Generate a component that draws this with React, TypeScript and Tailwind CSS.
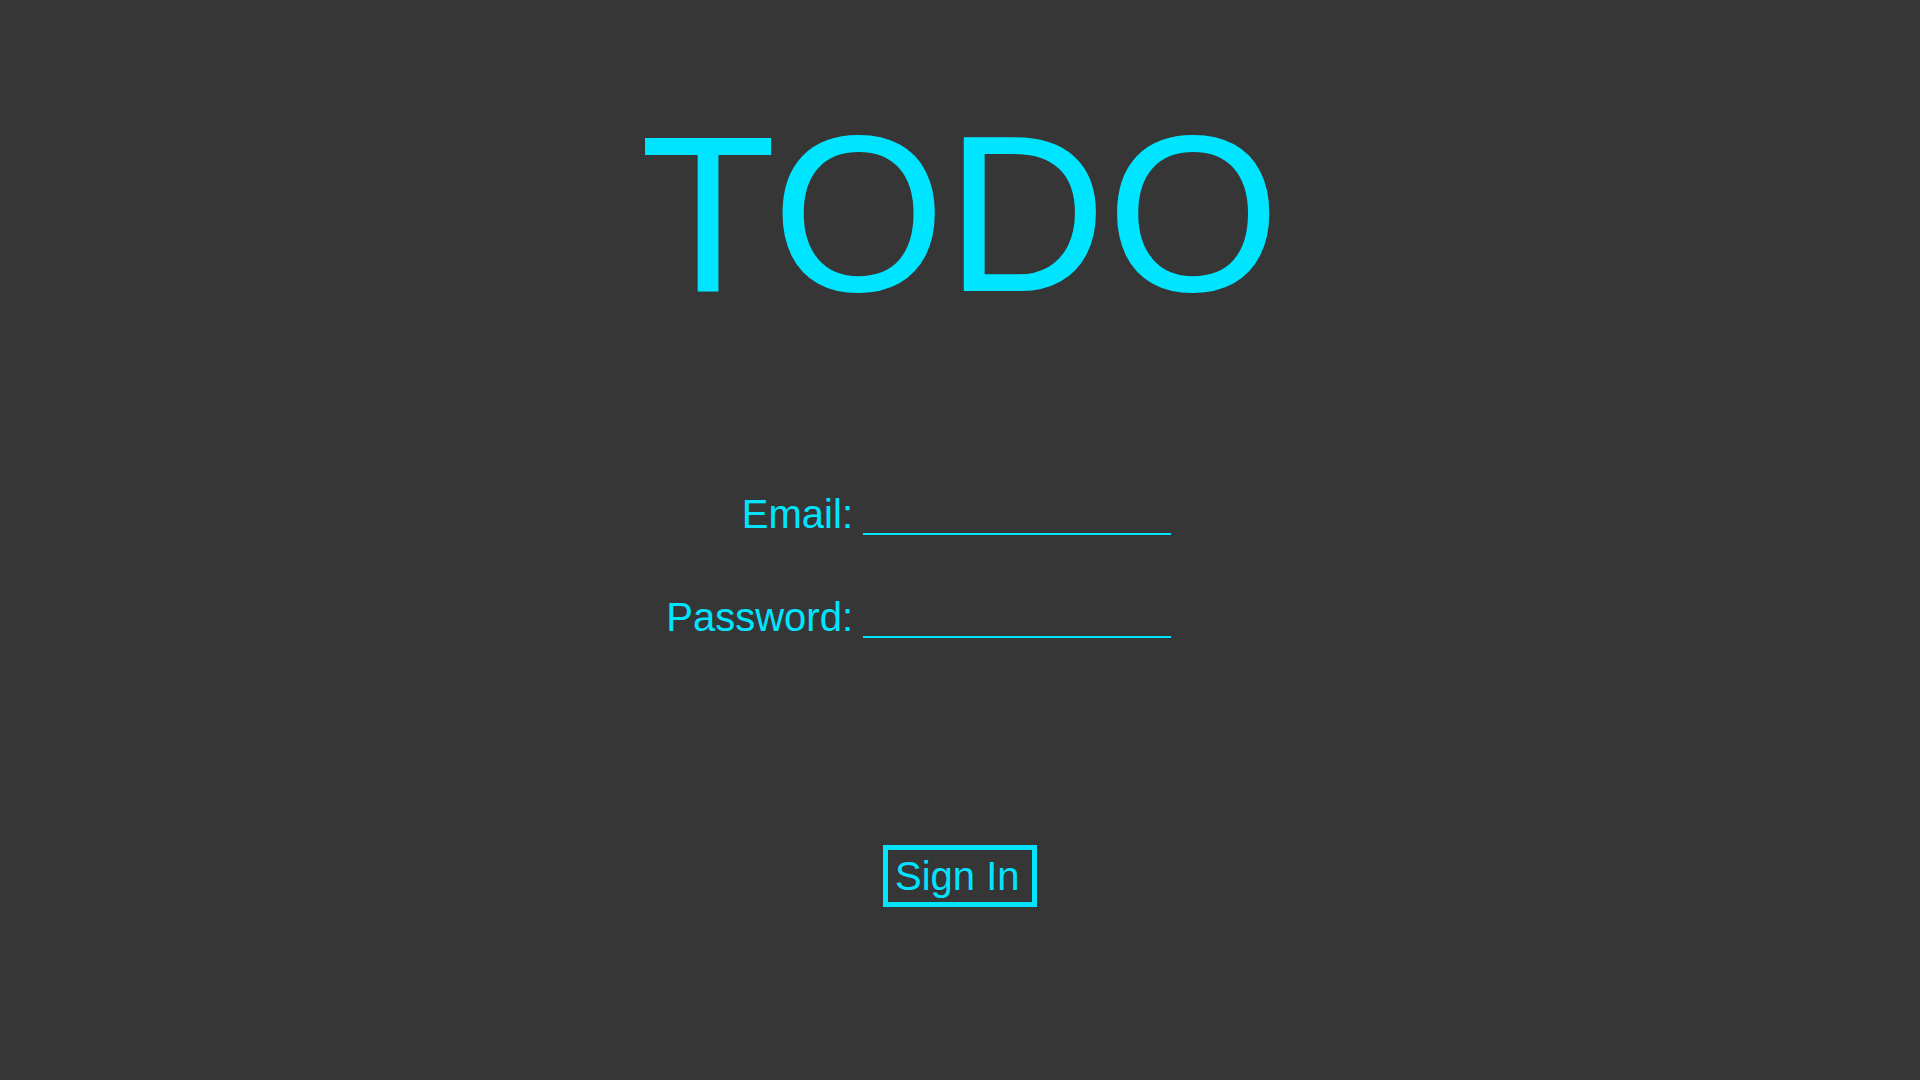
export default function App() {
  return (
    <div
      className="min-h-screen w-full bg-[#363636] text-[#00e5ff] flex flex-col"
      style={{ fontFamily: '"Liberation Sans", Arial, sans-serif' }}
    >
      <h1 className="mt-[86px] text-center text-[223px] leading-[normal] font-normal">TODO</h1>
      <div className="mt-[150px] grid grid-cols-[853px_308px] gap-x-[10px] gap-y-[57px] text-[40px] leading-[normal]">
        <label className="text-right h-[46px]">Email:</label>
        <input
          type="email"
          className="h-[43px] bg-transparent border-0 border-b-2 border-[#00e5ff] outline-none text-[#00e5ff] text-[32px]"
        />
        <label className="text-right h-[46px]">Password:</label>
        <input
          type="password"
          className="h-[43px] bg-transparent border-0 border-b-2 border-[#00e5ff] outline-none text-[#00e5ff] text-[32px]"
        />
      </div>
      <div className="mt-[204px] flex justify-center">
        <button className="w-[154px] h-[62px] border-[5px] border-[#00e5ff] bg-transparent text-[#00e5ff] text-[40px] leading-[normal] pl-[7px] text-left">
          Sign In
        </button>
      </div>
    </div>
  );
}
